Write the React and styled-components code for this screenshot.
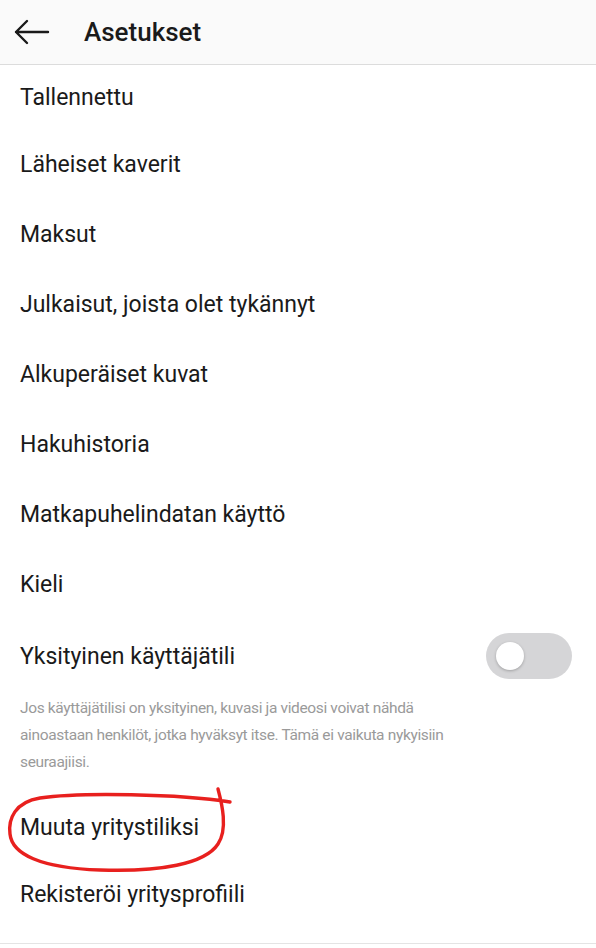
import React from 'react'
import styled, { createGlobalStyle } from 'styled-components'

const Global = createGlobalStyle`
  body { margin: 0; background: #fff; font-family: Roboto, "Liberation Sans", sans-serif; }
`

const Page = styled.div`
  width: 596px;
  height: 948px;
  background: #fff;
  overflow: hidden;
  display: flex;
  flex-direction: column;
`

const Header = styled.header`
  height: 64px;
  display: flex;
  align-items: center;
  gap: 34px;
  padding: 0 14px;
  background: #fafafa;
  border-bottom: 1.5px solid #dcdcdc;
  flex-shrink: 0;
`

const Title = styled.h1`
  margin: 0;
  font-size: 26px;
  font-weight: 500;
  color: #1a1a1a;
`

const List = styled.div`
  display: flex;
  flex-direction: column;
  padding-bottom: 15px;
  border-bottom: 1.5px solid #e4e4e4;
`

const Row = styled.div`
  position: relative;
  height: ${p => p.h || 70}px;
  display: flex;
  align-items: center;
  justify-content: space-between;
  padding: 0 24px 0 20px;
  font-size: 23px;
  color: #1a1a1a;
`

const Note = styled.p`
  margin: 0;
  padding: 2px 120px 18px 20px;
  font-size: 15.5px;
  letter-spacing: -0.35px;
  line-height: 27px;
  color: #9a9a9a;
`

const Track = styled.div`
  width: 86px;
  height: 46px;
  border-radius: 23px;
  background: #d5d5d7;
  display: flex;
  align-items: center;
  padding-left: 10px;
  box-sizing: border-box;
`

const Knob = styled.div`
  width: 28px;
  height: 28px;
  border-radius: 50%;
  background: #fff;
  box-shadow: 0 1px 3px rgba(0,0,0,0.25);
`

const Scribble = styled.svg`
  position: absolute;
  left: 0;
  top: -10px;
  pointer-events: none;
`

const items = [
  'Tallennettu',
  'Läheiset kaverit',
  'Maksut',
  'Julkaisut, joista olet tykännyt',
  'Alkuperäiset kuvat',
  'Hakuhistoria',
  'Matkapuhelindatan käyttö',
  'Kieli',
]

export default function App() {
  return (
    <Page>
      <Global />
      <Header>
        <svg width="36" height="26" viewBox="0 0 36 26" fill="none" stroke="#1a1a1a" strokeWidth="2.4" strokeLinecap="round" strokeLinejoin="round">
          <path d="M34 13H2M13 2L2 13l11 11" />
        </svg>
        <Title>Asetukset</Title>
      </Header>
      <List>
        {items.map((t, i) => (
          <Row key={t} h={i === 0 ? 64 : 70}>{t}</Row>
        ))}
        <Row h={74}>
          Yksityinen käyttäjätili
          <Track><Knob /></Track>
        </Row>
        <Note>
          Jos käyttäjätilisi on yksityinen, kuvasi ja videosi voivat nähdä ainoastaan henkilöt, jotka hyväksyt itse. Tämä ei vaikuta nykyisiin seuraajiisi.
        </Note>
        <Row h={67}>
          Muuta yritystiliksi
          <Scribble width="240" height="100" viewBox="0 0 240 100" fill="none" stroke="#e8201e" strokeWidth="3.4" strokeLinecap="round" strokeLinejoin="round">
            <path d="M230 18C180 10 80 8 40 14C15 18 8 35 10 50C12 70 40 84 100 86C160 88 205 80 218 60C228 45 222 20 218 5" />
          </Scribble>
        </Row>
        <Row h={67}>Rekisteröi yritysprofiili</Row>
      </List>
    </Page>
  )
}
